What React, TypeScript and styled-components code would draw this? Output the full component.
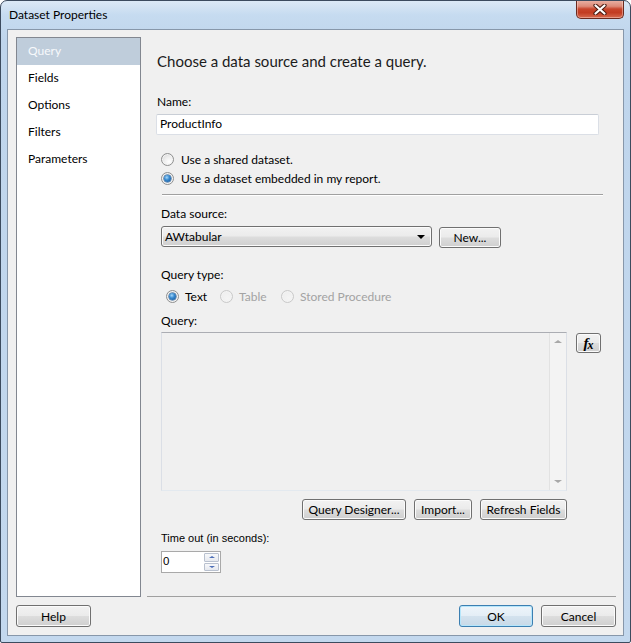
import React from "react";
import styled, { createGlobalStyle, css } from "styled-components";

const GlobalStyle = createGlobalStyle`
  html, body { margin: 0; padding: 0; background: #ffffff; }
  * { box-sizing: border-box; }
`;

const UI_FONT = `"Segoe UI", Lato, "Liberation Sans", sans-serif`;

const Window = styled.div`
  width: 631px;
  height: 643px;
  border: 1px solid #3c4b5e;
  border-radius: 7px 7px 2px 2px;
  background: linear-gradient(180deg, #dce9f6 0px, #c6dbf0 14px, #bfd5ec 40px, #c3d8ee 100%);
  padding: 0 6px 6px 6px;
  display: flex;
  flex-direction: column;
  font-family: ${UI_FONT};
  font-size: 12px;
  color: #000;
  overflow: hidden;
`;

const TitleBar = styled.div`
  height: 28px;
  display: flex;
  align-items: flex-start;
  justify-content: space-between;
  flex-shrink: 0;
`;

const Title = styled.div`
  margin-left: 2px;
  line-height: 28px;
  font-size: 12px;
  color: #000;
`;

const CloseButton = styled.div`
  width: 48px;
  height: 19px;
  margin-top: -1px;
  border: 1px solid #6b2a1f;
  border-top: none;
  border-radius: 0 0 5px 5px;
  background: linear-gradient(
    180deg,
    #eab4a8 0%,
    #dd8a78 35%,
    #c8452c 50%,
    #c23c22 70%,
    #d66a4f 100%
  );
  box-shadow: inset 0 0 0 1px rgba(255, 220, 210, 0.45);
  display: flex;
  align-items: center;
  justify-content: center;
`;

const Client = styled.div`
  flex: 1;
  display: flex;
  flex-direction: column;
  background: #f0f0f0;
  border: 1px solid #8797aa;
  padding: 7px 7px 8px 8px;
`;

const Main = styled.div`
  flex: 1;
  display: flex;
  min-height: 0;
`;

const Sidebar = styled.div`
  width: 125px;
  background: #ffffff;
  border: 1px solid #828790;
  display: flex;
  flex-direction: column;
`;

const NavItem = styled.div<{ $active?: boolean }>`
  height: 27px;
  line-height: 26px;
  padding-left: 11px;
  font-size: 12px;
  color: #000;
  ${(p) =>
    p.$active &&
    css`
      background: #bfcddb;
      color: #f7f9fb;
    `}
`;

const Pane = styled.div`
  flex: 1;
  margin-left: 6px;
  border-bottom: 1px solid #a0a0a0;
  display: flex;
  flex-direction: column;
`;

const Heading = styled.div`
  margin: 14px 0 0 10px;
  line-height: 21px;
  font-size: 15px;
  color: #1b1b1b;
`;

const Label = styled.div<{ $mt: number; $ml?: number; $legacy?: boolean }>`
  margin-top: ${(p) => p.$mt}px;
  margin-left: ${(p) => p.$ml ?? 14}px;
  line-height: 15px;
  height: 16px;
  font-size: 12px;
  ${(p) =>
    p.$legacy &&
    css`
      font-family: "Liberation Sans", Arial, sans-serif;
      font-size: 11px;
    `}
`;

const TextBox = styled.div`
  margin: 4px 0 0 9px;
  width: 443px;
  height: 21px;
  background: #ffffff;
  border: 1px solid #dbdfe6;
  border-top-color: #c9ced6;
  border-radius: 2px;
  padding-left: 3px;
  line-height: 18px;
  font-size: 12px;
`;

const RadioRow = styled.div<{ $mt: number; $pl?: number }>`
  margin-top: ${(p) => p.$mt}px;
  padding-left: ${(p) => p.$pl ?? 14}px;
  height: 18px;
  display: flex;
  align-items: center;
`;

const RadioOption = styled.div<{ $w?: number; $gap: number; $disabled?: boolean }>`
  display: flex;
  align-items: center;
  gap: ${(p) => p.$gap}px;
  ${(p) => (p.$w ? `width: ${p.$w}px;` : "")}
  color: ${(p) => (p.$disabled ? "#a3a3a3" : "#000")};
  font-size: 12px;
  white-space: nowrap;
`;

const RadioCircle = styled.span<{ $checked?: boolean; $disabled?: boolean }>`
  position: relative;
  width: 13px;
  height: 13px;
  border-radius: 50%;
  flex-shrink: 0;
  border: 1px solid ${(p) => (p.$disabled ? "#c9c9c9" : "#8e8f8f")};
  background: ${(p) =>
    p.$disabled
      ? "radial-gradient(circle at 60% 65%, #f4f4f4 0%, #ececec 100%)"
      : "radial-gradient(circle at 65% 70%, #ffffff 0%, #f0f0f0 40%, #d2d2d2 100%)"};
  box-shadow: inset 0 0 0 1px ${(p) => (p.$disabled ? "#f3f3f3" : "#f4f4f4")};
  ${(p) =>
    p.$checked &&
    css`
      &::after {
        content: "";
        position: absolute;
        left: 2px;
        top: 2px;
        width: 7px;
        height: 7px;
        border-radius: 50%;
        background: radial-gradient(circle at 40% 35%, #a5d8fa 0%, #3a8bd0 40%, #0e4c8f 100%);
        box-shadow: 0 0 0 0.5px #1a4f86;
      }
    `}
`;

const Separator = styled.div`
  margin: 7px 13px 0 15px;
  height: 1px;
  background: #a0a0a0;
  border-bottom: 1px solid #ffffff;
  box-sizing: content-box;
`;

const ComboRow = styled.div`
  margin: 4px 0 0 14px;
  display: flex;
  align-items: flex-start;
  gap: 7px;
  height: 22px;
`;

const buttonLook = css`
  border: 1px solid #707070;
  border-radius: 3px;
  background: linear-gradient(180deg, #f2f2f2 0%, #ebebeb 48%, #dddddd 52%, #cfcfcf 100%);
  box-shadow: inset 0 0 0 1px #fbfbfb;
`;

const Combo = styled.div`
  ${buttonLook};
  width: 271px;
  height: 21px;
  display: flex;
  align-items: center;
  justify-content: space-between;
  padding: 0 4px 0 3px;
  font-size: 12px;
`;

const ComboArrow = styled.span`
  width: 0;
  height: 0;
  border-left: 4px solid transparent;
  border-right: 4px solid transparent;
  border-top: 4px solid #000;
  margin-right: 2px;
`;

const Button = styled.div<{ $w: number; $default?: boolean; $mt?: number }>`
  ${buttonLook};
  width: ${(p) => p.$w}px;
  height: ${(p) => (p.$default !== undefined ? 22 : 21)}px;
  margin-top: ${(p) => p.$mt ?? 0}px;
  display: flex;
  align-items: center;
  justify-content: center;
  font-size: 12px;
  color: #000;
  flex-shrink: 0;
  ${(p) =>
    p.$default &&
    css`
      border-color: #3c7fb1;
      box-shadow: inset 0 0 0 1px #b6e6fb;
      background: linear-gradient(180deg, #eef5fa 0%, #e4eef6 48%, #d3e2ee 52%, #c8d9e7 100%);
    `}
`;

const QueryRow = styled.div`
  margin: 3px 0 0 14px;
  display: flex;
  align-items: flex-start;
  gap: 9px;
  height: 159px;
`;

const QueryBox = styled.div`
  width: 406px;
  height: 159px;
  background: #f0f0f0;
  border: 1px solid #dbdfe6;
  border-top-color: #abadb3;
  border-bottom-color: #e3e9ef;
  display: flex;
  justify-content: flex-end;
`;

const ScrollTrack = styled.div`
  width: 17px;
  height: 100%;
  border-left: 1px solid #e2e2e2;
  background: #f3f3f3;
  display: flex;
  flex-direction: column;
  align-items: center;
  justify-content: space-between;
  padding: 7px 0 7px;
`;

const Tri = styled.span<{ $dir: "up" | "down"; $color: string; $size?: number }>`
  width: 0;
  height: 0;
  border-left: ${(p) => p.$size ?? 4}px solid transparent;
  border-right: ${(p) => p.$size ?? 4}px solid transparent;
  ${(p) =>
    p.$dir === "up"
      ? `border-bottom: ${(p.$size ?? 4) - 1}px solid ${p.$color};`
      : `border-top: ${(p.$size ?? 4) - 1}px solid ${p.$color};`}
`;

const FxButton = styled.div`
  ${buttonLook};
  margin-top: 1px;
  width: 25px;
  height: 20px;
  display: flex;
  align-items: center;
  justify-content: center;
  font-family: "Liberation Serif", "Times New Roman", serif;
  font-style: italic;
  font-weight: bold;
  color: #000;
`;

const FxF = styled.span`
  font-size: 15px;
  line-height: 1;
`;

const FxX = styled.span`
  font-size: 12px;
  line-height: 1;
  margin-top: 4px;
  margin-left: -1px;
`;

const ActionRow = styled.div`
  margin: 8px 0 0 14px;
  width: 406px;
  display: flex;
  justify-content: flex-end;
  gap: 8px;
  height: 21px;
`;

const Spin = styled.div`
  margin: 4px 0 0 14px;
  width: 60px;
  height: 22px;
  background: #ffffff;
  border: 1px solid #a9a9a9;
  display: flex;
  font-family: "Liberation Sans", Arial, sans-serif;
  font-size: 11.5px;
`;

const SpinValue = styled.div`
  flex: 1;
  padding-left: 1px;
  line-height: 19px;
`;

const SpinButtons = styled.div`
  width: 16px;
  display: flex;
  flex-direction: column;
  padding: 1px 1px 1px 0;
  gap: 1px;
`;

const SpinButton = styled.div`
  flex: 1;
  border: 1px solid #b9c1cf;
  border-radius: 1px;
  background: linear-gradient(180deg, #f7f8fa 0%, #e6e9ef 100%);
  display: flex;
  align-items: center;
  justify-content: center;
`;

const Footer = styled.div`
  margin-top: 8px;
  height: 22px;
  display: flex;
  justify-content: space-between;
  flex-shrink: 0;
`;

const FooterGroup = styled.div`
  display: flex;
  gap: 8px;
`;

const CloseGlyph = () => (
  <svg width="14" height="11" viewBox="0 0 14 11">
    <path d="M2.5 1.5 L11.5 9.5 M11.5 1.5 L2.5 9.5" stroke="#4a1b12" strokeWidth="4.2" strokeLinecap="round" />
    <path d="M2.5 1.5 L11.5 9.5 M11.5 1.5 L2.5 9.5" stroke="#ffffff" strokeWidth="2.2" strokeLinecap="round" />
  </svg>
);

const navItems = ["Query", "Fields", "Options", "Filters", "Parameters"];

export default function App() {
  return (
    <>
      <GlobalStyle />
      <Window>
        <TitleBar>
          <Title>Dataset Properties</Title>
          <CloseButton>
            <CloseGlyph />
          </CloseButton>
        </TitleBar>
        <Client>
          <Main>
            <Sidebar>
              {navItems.map((n, i) => (
                <NavItem key={n} $active={i === 0}>
                  {n}
                </NavItem>
              ))}
            </Sidebar>
            <Pane>
              <Heading>Choose a data source and create a query.</Heading>
              <Label $mt={22} $ml={10}>
                Name:
              </Label>
              <TextBox>ProductInfo</TextBox>
              <RadioRow $mt={15}>
                <RadioOption $gap={7}>
                  <RadioCircle />
                  Use a shared dataset.
                </RadioOption>
              </RadioRow>
              <RadioRow $mt={1}>
                <RadioOption $gap={7}>
                  <RadioCircle $checked />
                  Use a dataset embedded in my report.
                </RadioOption>
              </RadioRow>
              <Separator />
              <Label $mt={10}>Data source:</Label>
              <ComboRow>
                <Combo>
                  <span>AWtabular</span>
                  <ComboArrow />
                </Combo>
                <Button $w={62} $mt={1}>
                  New...
                </Button>
              </ComboRow>
              <Label $mt={19}>Query type:</Label>
              <RadioRow $mt={4} $pl={19}>
                <RadioOption $gap={6} $w={54}>
                  <RadioCircle $checked />
                  Text
                </RadioOption>
                <RadioOption $gap={6} $w={61} $disabled>
                  <RadioCircle $disabled />
                  Table
                </RadioOption>
                <RadioOption $gap={6} $disabled>
                  <RadioCircle $disabled />
                  Stored Procedure
                </RadioOption>
              </RadioRow>
              <Label $mt={8}>Query:</Label>
              <QueryRow>
                <QueryBox>
                  <ScrollTrack>
                    <Tri $dir="up" $color="#a8a8a8" />
                    <Tri $dir="down" $color="#a8a8a8" />
                  </ScrollTrack>
                </QueryBox>
                <FxButton>
                  <FxF>f</FxF>
                  <FxX>x</FxX>
                </FxButton>
              </QueryRow>
              <ActionRow>
                <Button $w={104}>Query Designer...</Button>
                <Button $w={58}>Import...</Button>
                <Button $w={87}>Refresh Fields</Button>
              </ActionRow>
              <Label $mt={11} $legacy>
                Time out (in seconds):
              </Label>
              <Spin>
                <SpinValue>0</SpinValue>
                <SpinButtons>
                  <SpinButton>
                    <Tri $dir="up" $color="#4d6fb8" $size={3} />
                  </SpinButton>
                  <SpinButton>
                    <Tri $dir="down" $color="#4d6fb8" $size={3} />
                  </SpinButton>
                </SpinButtons>
              </Spin>
            </Pane>
          </Main>
          <Footer>
            <Button $w={75} $default={false}>
              Help
            </Button>
            <FooterGroup>
              <Button $w={74} $default>
                OK
              </Button>
              <Button $w={75} $default={false}>
                Cancel
              </Button>
            </FooterGroup>
          </Footer>
        </Client>
      </Window>
    </>
  );
}
